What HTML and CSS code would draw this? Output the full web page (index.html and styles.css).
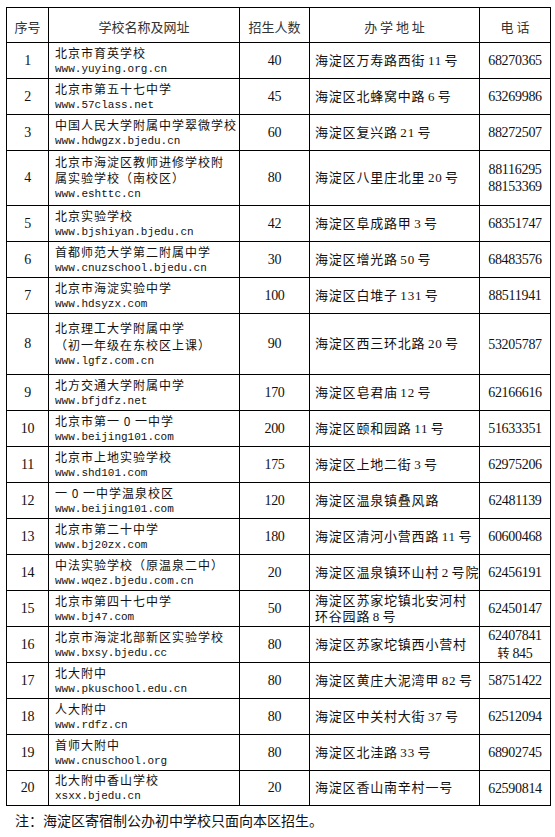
FILE: index.html
```html
<!DOCTYPE html>
<html lang="zh-CN">
<head>
<meta charset="utf-8">
<title>海淀区寄宿制公办初中学校</title>
<link rel="stylesheet" href="styles.css">
</head>
<body>
<div class="wrap">
<table class="tbl">
<colgroup>
<col class="c1"><col class="c2"><col class="c3"><col class="c4"><col class="c5">
</colgroup>
<thead>
<tr class="hd">
<th>序号</th><th>学校名称及网址</th><th>招生人数</th><th>办&nbsp;学&nbsp;地&nbsp;址</th><th>电&nbsp;话</th>
</tr>
</thead>
<tbody>
<tr><td class="no">1</td><td class="nm"><div class="cn">北京市育英学校</div><div class="url">www.yuying.org.cn</div></td><td class="ct">40</td><td class="ad">海淀区万寿路西街 11 号</td><td class="ph">68270365</td></tr>
<tr><td class="no">2</td><td class="nm"><div class="cn">北京市第五十七中学</div><div class="url">www.57class.net</div></td><td class="ct">45</td><td class="ad">海淀区北蜂窝中路 6 号</td><td class="ph">63269986</td></tr>
<tr><td class="no">3</td><td class="nm"><div class="cn">中国人民大学附属中学翠微学校</div><div class="url">www.hdwgzx.bjedu.cn</div></td><td class="ct">60</td><td class="ad">海淀区复兴路 21 号</td><td class="ph">88272507</td></tr>
<tr class="r4"><td class="no">4</td><td class="nm"><div class="cn">北京市海淀区教师进修学校附</div><div class="cn">属实验学校（南校区）</div><div class="url">www.eshttc.cn</div></td><td class="ct">80</td><td class="ad">海淀区八里庄北里 20 号</td><td class="ph">88116295<br>88153369</td></tr>
<tr><td class="no">5</td><td class="nm"><div class="cn">北京实验学校</div><div class="url">www.bjshiyan.bjedu.cn</div></td><td class="ct">42</td><td class="ad">海淀区阜成路甲 3 号</td><td class="ph">68351747</td></tr>
<tr><td class="no">6</td><td class="nm"><div class="cn">首都师范大学第二附属中学</div><div class="url">www.cnuzschool.bjedu.cn</div></td><td class="ct">30</td><td class="ad">海淀区增光路 50 号</td><td class="ph">68483576</td></tr>
<tr><td class="no">7</td><td class="nm"><div class="cn">北京市海淀实验中学</div><div class="url">www.hdsyzx.com</div></td><td class="ct">100</td><td class="ad">海淀区白堆子 131 号</td><td class="ph">88511941</td></tr>
<tr class="r8"><td class="no">8</td><td class="nm"><div class="cn">北京理工大学附属中学</div><div class="cn">（初一年级在东校区上课）</div><div class="url">www.lgfz.com.cn</div></td><td class="ct">90</td><td class="ad">海淀区西三环北路 20 号</td><td class="ph">53205787</td></tr>
<tr><td class="no">9</td><td class="nm"><div class="cn">北方交通大学附属中学</div><div class="url">www.bfjdfz.net</div></td><td class="ct">170</td><td class="ad">海淀区皂君庙 12 号</td><td class="ph">62166616</td></tr>
<tr><td class="no">10</td><td class="nm"><div class="cn">北京市第一 0 一中学</div><div class="url">www.beijing101.com</div></td><td class="ct">200</td><td class="ad">海淀区颐和园路 11 号</td><td class="ph">51633351</td></tr>
<tr><td class="no">11</td><td class="nm"><div class="cn">北京市上地实验学校</div><div class="url">www.shd101.com</div></td><td class="ct">175</td><td class="ad">海淀区上地二街 3 号</td><td class="ph">62975206</td></tr>
<tr><td class="no">12</td><td class="nm"><div class="cn">一 0 一中学温泉校区</div><div class="url">www.beijing101.com</div></td><td class="ct">120</td><td class="ad">海淀区温泉镇叠风路</td><td class="ph">62481139</td></tr>
<tr><td class="no">13</td><td class="nm"><div class="cn">北京市第二十中学</div><div class="url">www.bj20zx.com</div></td><td class="ct">180</td><td class="ad">海淀区清河小营西路 11 号</td><td class="ph">60600468</td></tr>
<tr><td class="no">14</td><td class="nm"><div class="cn">中法实验学校（原温泉二中）</div><div class="url">www.wqez.bjedu.com.cn</div></td><td class="ct">20</td><td class="ad">海淀区温泉镇环山村 2 号院</td><td class="ph">62456191</td></tr>
<tr><td class="no">15</td><td class="nm"><div class="cn">北京市第四十七中学</div><div class="url">www.bj47.com</div></td><td class="ct">50</td><td class="ad">海淀区苏家坨镇北安河村<br>环谷园路 8 号</td><td class="ph">62450147</td></tr>
<tr><td class="no">16</td><td class="nm"><div class="cn">北京市海淀北部新区实验学校</div><div class="url">www.bxsy.bjedu.cc</div></td><td class="ct">80</td><td class="ad">海淀区苏家坨镇西小营村</td><td class="ph">62407841<br><span class="zh">转</span> 845</td></tr>
<tr><td class="no">17</td><td class="nm"><div class="cn">北大附中</div><div class="url">www.pkuschool.edu.cn</div></td><td class="ct">80</td><td class="ad">海淀区黄庄大泥湾甲 82 号</td><td class="ph">58751422</td></tr>
<tr><td class="no">18</td><td class="nm"><div class="cn">人大附中</div><div class="url">www.rdfz.cn</div></td><td class="ct">80</td><td class="ad">海淀区中关村大街 37 号</td><td class="ph">62512094</td></tr>
<tr><td class="no">19</td><td class="nm"><div class="cn">首师大附中</div><div class="url">www.cnuschool.org</div></td><td class="ct">80</td><td class="ad">海淀区北洼路 33 号</td><td class="ph">68902745</td></tr>
<tr class="r20"><td class="no">20</td><td class="nm"><div class="cn">北大附中香山学校</div><div class="url">xsxx.bjedu.cn</div></td><td class="ct">20</td><td class="ad">海淀区香山南辛村一号</td><td class="ph">62590814</td></tr>
</tbody>
</table>
<p class="note">注：海淀区寄宿制公办初中学校只面向本区招生。</p>
</div>
</body>
</html>
```
FILE: styles.css
```css
html, body {
  margin: 0;
  padding: 0;
  background: #fff;
}
.wrap {
  padding: 7px 0 0 6px;
}
.tbl {
  border-collapse: collapse;
  table-layout: fixed;
  width: 544px;
  color: #111;
  font-family: "Liberation Serif", "Noto Sans CJK SC", serif;
}
.c1 { width: 42px; }
.c2 { width: 191px; }
.c3 { width: 70px; }
.c4 { width: 170px; }
.c5 { width: 71px; }
.tbl th, .tbl td {
  border: 1px solid #000;
  padding: 0;
  vertical-align: middle;
  white-space: nowrap;
  overflow: hidden;
}
.tbl th {
  font-family: "Noto Sans CJK SC", sans-serif;
  font-weight: 400;
  font-size: 13px;
  color: #333;
  text-align: center;
  padding-top: 3px;
}
.hd { height: 35px; }
.tbl tbody tr { height: 36px; }
.tbl tbody tr.r4 { height: 55px; }
.tbl tbody tr.r8 { height: 61px; }
.tbl tbody tr.r20 { height: 35px; }
.no, .ct, .ph {
  text-align: center;
  font-size: 14px;
  letter-spacing: -0.3px;
}
.ph {
  line-height: 17px;
  padding-left: 1px;
}
.zh {
  font-family: "Noto Sans CJK SC", sans-serif;
  font-size: 12px;
}
.nm {
  padding-left: 6px !important;
  padding-top: 1px !important;
}
.cn {
  font-family: "Noto Sans CJK SC", sans-serif;
  font-size: 12px;
  letter-spacing: 1px;
  line-height: 16px;
  color: #111;
}
.r8 .cn { line-height: 17px; }
.url {
  font-family: "Liberation Mono", monospace;
  font-size: 11px;
  line-height: 17px;
  color: #111;
}
.ad {
  padding-left: 5px !important;
  font-size: 13px;
  letter-spacing: 0.8px;
  word-spacing: -1.5px;
  line-height: 16px;
  font-family: "Liberation Serif", "Noto Sans CJK SC", serif;
}
.note {
  margin: 0;
  padding: 5px 0 0 9px;
  font-family: "Noto Sans CJK SC", sans-serif;
  font-size: 14px;
  line-height: 18px;
  color: #111;
}
```
